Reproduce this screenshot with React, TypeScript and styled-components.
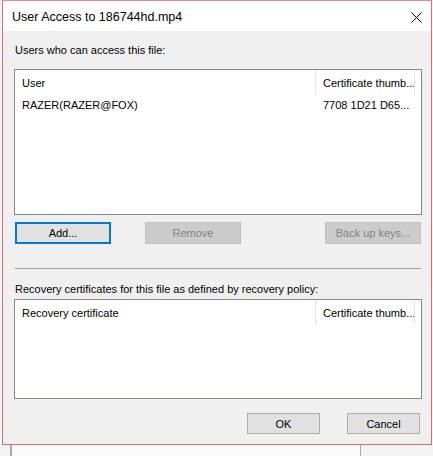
import styled, { createGlobalStyle } from "styled-components";

const GlobalStyle = createGlobalStyle`
  html, body {
    margin: 0;
    padding: 0;
    background: #f4f4f4;
  }
  body {
    font-family: "Liberation Sans", Arial, sans-serif;
    font-size: 11px;
    color: #000;
  }
`;

type Column = { title: string; width: number };

const userColumns: Column[] = [
  { title: "User", width: 301 },
  { title: "Certificate thumb...", width: 99 },
];

const recoveryColumns: Column[] = [
  { title: "Recovery certificate", width: 301 },
  { title: "Certificate thumb...", width: 99 },
];

export default function App() {
  return (
    <>
      <GlobalStyle />
      <Desktop>
        <Dialog>
          <TitleBar>
            <Title>User Access to 186744hd.mp4</Title>
            <CloseButton aria-label="Close">
              <svg width="11" height="11" viewBox="0 0 11 11">
                <path d="M0.5 0.5 L10.5 10.5 M10.5 0.5 L0.5 10.5" stroke="#000" strokeWidth="1" />
              </svg>
            </CloseButton>
          </TitleBar>
          <Body>
            <Label>Users who can access this file:</Label>
            <ListView $height={146} $gap={12}>
              <HeaderRow>
                {userColumns.map((c) => (
                  <HeaderCell key={c.title} style={{ width: c.width }}>
                    {c.title}
                  </HeaderCell>
                ))}
              </HeaderRow>
              <Row>
                <Cell style={{ width: userColumns[0].width }}>RAZER(RAZER@FOX)</Cell>
                <Cell style={{ width: userColumns[1].width }}>7708 1D21 D65...</Cell>
              </Row>
            </ListView>
            <ButtonRow>
              <Button $focused>Add...</Button>
              <Button disabled>Remove</Button>
              <Spacer />
              <Button disabled>Back up keys...</Button>
            </ButtonRow>
            <Separator />
            <Label>Recovery certificates for this file as defined by recovery policy:</Label>
            <ListView $height={100} $gap={3}>
              <HeaderRow>
                {recoveryColumns.map((c) => (
                  <HeaderCell key={c.title} style={{ width: c.width }}>
                    {c.title}
                  </HeaderCell>
                ))}
              </HeaderRow>
            </ListView>
            <Footer>
              <FooterButton>OK</FooterButton>
              <FooterButton>Cancel</FooterButton>
            </Footer>
          </Body>
        </Dialog>
        <BackWindow />
      </Desktop>
    </>
  );
}

const Desktop = styled.div`
  width: 433px;
  height: 456px;
  position: relative;
  overflow: hidden;
  padding-left: 2px;
  box-sizing: border-box;
`;

const Dialog = styled.div`
  position: relative;
  z-index: 1;
  width: 430px;
  height: 445px;
  box-sizing: border-box;
  border: 1px solid #dc6a7e;
  border-top-color: #e58a98;
  background: #f0f0f0;
  display: flex;
  flex-direction: column;
`;

const BackWindow = styled.div`
  position: absolute;
  left: 10px;
  top: 440px;
  width: 348px;
  height: 30px;
  border-left: 2px solid #a8a8a8;
  border-right: 1px solid #a8a8a8;
  background: #fafafa;
`;

const TitleBar = styled.div`
  height: 30px;
  background: #fff;
  display: flex;
  align-items: center;
  padding-left: 9px;
  flex-shrink: 0;
`;

const Title = styled.span`
  font-family: "Liberation Sans", Arial, sans-serif;
  font-size: 12.5px;
  flex: 1;
  padding-top: 2px;
`;

const CloseButton = styled.div`
  width: 30px;
  height: 30px;
  display: flex;
  align-items: center;
  justify-content: center;
  margin-top: 2px;
`;

const Body = styled.div`
  flex: 1;
  padding: 12px 9px 0 11px;
  display: flex;
  flex-direction: column;
`;

const Label = styled.div`
  height: 14px;
  line-height: 14px;
  padding-left: 1px;
`;

const ListView = styled.div<{ $height: number; $gap: number }>`
  height: ${(p) => p.$height}px;
  margin-top: ${(p) => p.$gap}px;
  background: #fff;
  border: 1px solid #828790;
  box-sizing: border-box;
  display: flex;
  flex-direction: column;
`;

const HeaderRow = styled.div`
  display: flex;
  height: 25px;
  align-items: stretch;
`;

const HeaderCell = styled.div`
  box-sizing: border-box;
  padding-left: 7px;
  padding-top: 7px;
  border-right: 1px solid #e5e5e5;
  white-space: nowrap;
  overflow: hidden;
`;

const Row = styled.div`
  display: flex;
  height: 16px;
  line-height: 16px;
  margin-top: 2px;
`;

const Cell = styled.div`
  box-sizing: border-box;
  padding-left: 7px;
  white-space: nowrap;
`;

const ButtonRow = styled.div`
  display: flex;
  gap: 34px;
  margin-top: 7px;
  padding-left: 1px;
  padding-right: 1px;
`;

const Spacer = styled.div`
  flex: 1;
`;

const Button = styled.button<{ $focused?: boolean }>`
  width: 96px;
  height: 22px;
  box-sizing: border-box;
  font-family: "Liberation Sans", Arial, sans-serif;
  font-size: 11px;
  color: #000;
  background: #e1e1e1;
  border: ${(p) => (p.$focused ? "2px solid #0078d7" : "1px solid #adadad")};
  padding: 0;
  &:disabled {
    background: #cccccc;
    border-color: #bfbfbf;
    color: #838383;
  }
`;

const Separator = styled.div`
  height: 1px;
  background: #a0a0a0;
  margin: 24px 1px 13px 1px;
`;

const Footer = styled.div`
  display: flex;
  justify-content: flex-end;
  gap: 27px;
  margin-top: 14px;
  padding-right: 2px;
`;

const FooterButton = styled.button`
  width: 73px;
  height: 21px;
  box-sizing: border-box;
  font-family: "Liberation Sans", Arial, sans-serif;
  font-size: 11px;
  color: #000;
  background: #e1e1e1;
  border: 1px solid #adadad;
  padding: 0;
`;
